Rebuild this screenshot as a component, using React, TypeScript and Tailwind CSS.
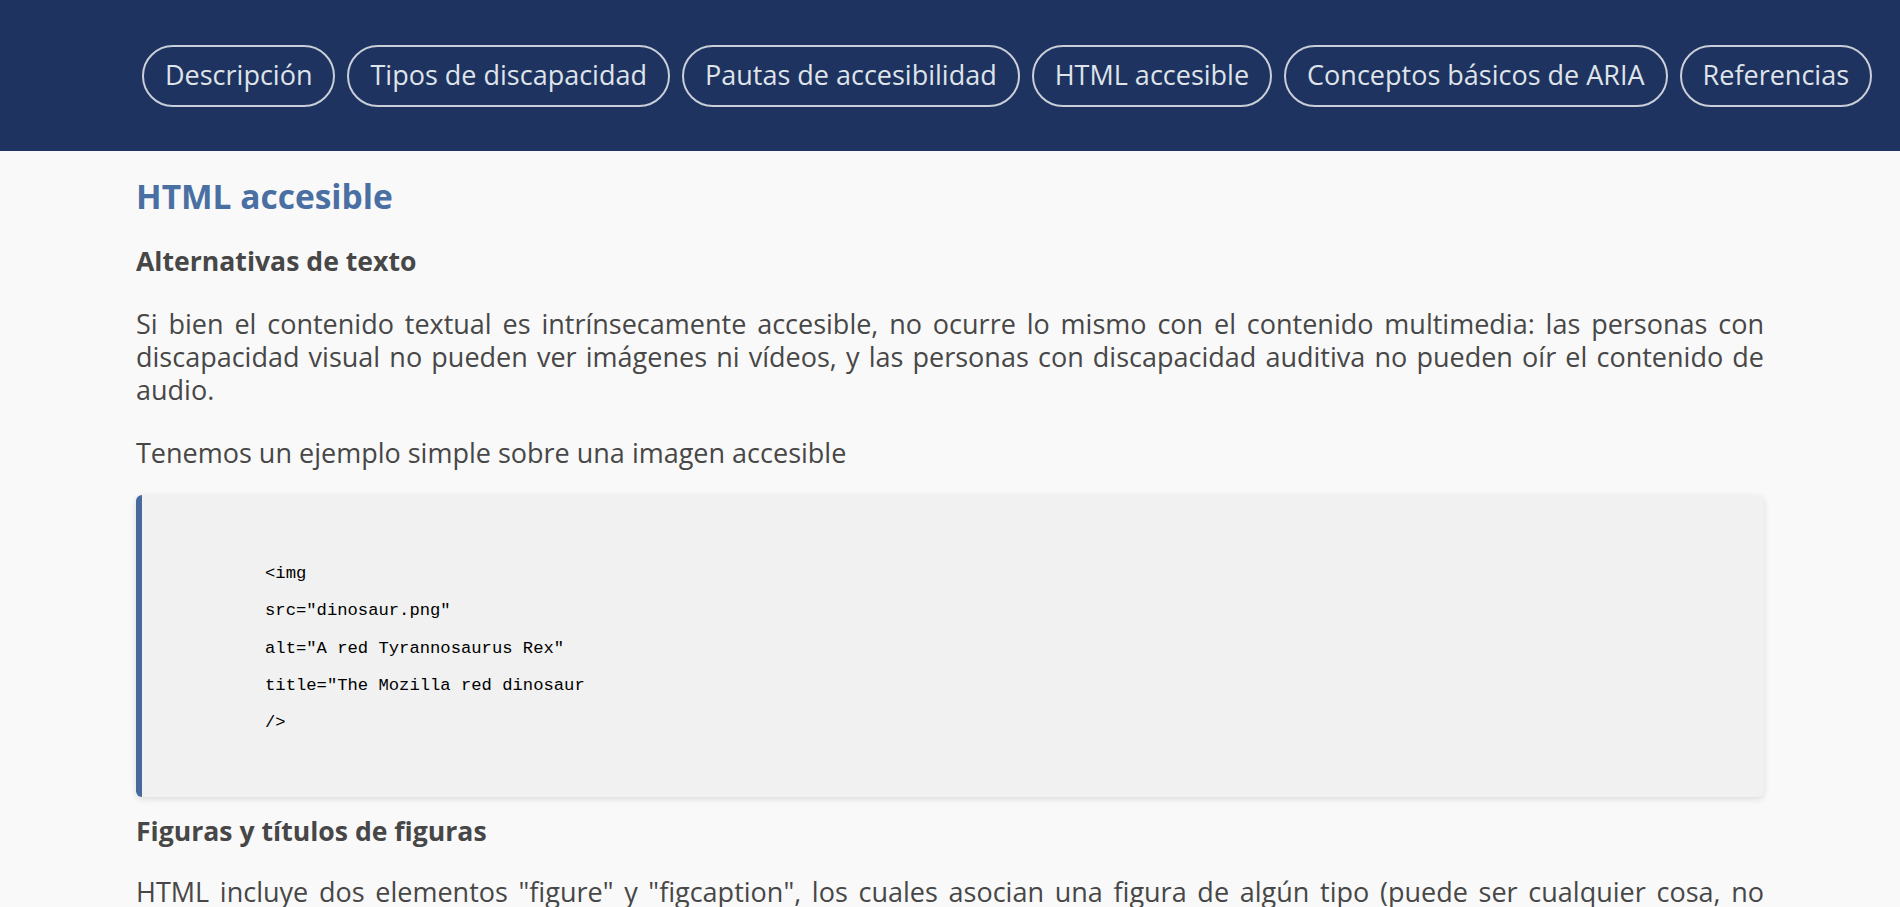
import React from 'react'

const sections = [
  'Descripción',
  'Tipos de discapacidad',
  'Pautas de accesibilidad',
  'HTML accesible',
  'Conceptos básicos de ARIA',
  'Referencias',
]

const codeLines = [
  '<img',
  'src="dinosaur.png"',
  'alt="A red Tyrannosaurus Rex"',
  'title="The Mozilla red dinosaur',
  '/>',
]

function Justified({ lines }: { lines: string[] }) {
  return (
    <p className="text-justify text-[27px] leading-[33px] text-[#474747]">
      {lines.map((line, i) => (
        <span
          key={i}
          className={
            i < lines.length - 1
              ? 'block whitespace-nowrap [text-align-last:justify]'
              : 'block'
          }
        >
          {line}
        </span>
      ))}
    </p>
  )
}

export default function App() {
  return (
    <div className="min-h-screen bg-[#f9f9f9] font-['Open_Sans',sans-serif]">
      <header className="h-[151px] bg-[#1e335f] flex items-center pl-[142px]">
        <nav className="flex gap-3">
          {sections.map((s) => (
            <a
              key={s}
              href="#"
              className="h-[62px] px-[21px] flex items-center rounded-full border-2 border-[#c9ced9] text-[#dfe3ea] text-[27px] whitespace-nowrap"
            >
              {s}
            </a>
          ))}
        </nav>
      </header>

      <main className="w-[1628px] mx-auto">
        <h1 className="mt-[26px] text-[33.5px] leading-[38px] font-bold text-[#4a6fa3]">
          HTML accesible
        </h1>

        <h3 className="mt-[30px] text-[26.6px] leading-[32px] font-bold text-[#474747]">
          Alternativas de texto
        </h3>

        <div className="mt-[30px]">
          <Justified
            lines={[
              'Si bien el contenido textual es intrínsecamente accesible, no ocurre lo mismo con el contenido multimedia: las personas con',
              'discapacidad visual no pueden ver imágenes ni vídeos, y las personas con discapacidad auditiva no pueden oír el contenido de',
              'audio.',
            ]}
          />
        </div>

        <p className="mt-[30px] text-[27px] leading-[33px] text-[#474747]">
          Tenemos un ejemplo simple sobre una imagen accesible
        </p>

        <pre className="mt-[26px] rounded-md border-l-[6px] border-[#476a9e] bg-[#f0f1f0] shadow-[0_2px_6px_rgba(0,0,0,0.12)] pl-[123px] pt-[60px] pb-[56px] font-['Liberation_Mono',monospace] text-[17.2px] leading-[37.3px] text-black">
          {codeLines.map((l) => (
            <div key={l}>{l}</div>
          ))}
        </pre>

        <h3 className="mt-[18px] text-[26.6px] leading-[32px] font-bold text-[#474747]">
          Figuras y títulos de figuras
        </h3>

        <div className="mt-[28px]">
          <Justified
            lines={[
              'HTML incluye dos elementos "figure" y "figcaption", los cuales asocian una figura de algún tipo (puede ser cualquier cosa, no',
              'necesariamente una imagen) con un título de figura.',
            ]}
          />
        </div>
      </main>
    </div>
  )
}
